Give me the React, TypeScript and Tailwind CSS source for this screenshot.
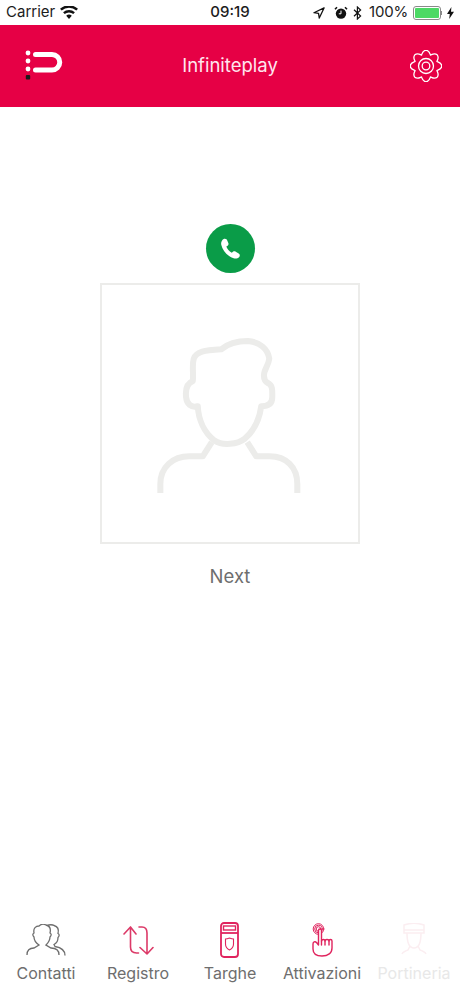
import React from 'react';

const font = "font-['Inter','Liberation_Sans',sans-serif]";

// eight rounded teeth around the centre of a 32 box
const gearPath = () => {
  const pt = (r: number, deg: number) => {
    const a = (deg * Math.PI) / 180;
    return `${(16 + r * Math.cos(a)).toFixed(2)} ${(16 + r * Math.sin(a)).toFixed(2)}`;
  };
  let d = `M${pt(11.8, -22.5)}`;
  for (let i = 0; i < 8; i++) {
    const c = i * 45;
    d += `C${pt(13, c - 17)} ${pt(15.800, c - 13)} ${pt(15.800, c)}`;
    d += `C${pt(15.800, c + 13)} ${pt(13, c + 17)} ${pt(11.800, c + 22.500)}`;
  }
  return d + 'Z';
};

const StatusBar = () => (
  <div className="flex h-[25px] items-center justify-between bg-white px-[6px] text-[15px] text-[#1c1c1c]">
    <div className="flex w-[150px] items-center gap-[5px]">
      <span>Carrier</span>
      <svg width="18" height="13" viewBox="0 0 18 13" fill="#111">
        <path d="M9 13 6.2 9.7a4.4 4.4 0 0 1 5.6 0zM4.7 8 3.1 6.2a9 9 0 0 1 11.8 0L13.3 8a6.6 6.6 0 0 0-8.6 0zM1.7 4.6 0 2.8a13.3 13.3 0 0 1 18 0l-1.7 1.8a11 11 0 0 0-14.6 0z" />
      </svg>
    </div>
    <span className="font-medium">09:19</span>
    <div className="flex w-[150px] items-center justify-end gap-[5px]">
      <svg className="mr-[4px]" width="12" height="12" viewBox="0 0 13 13" fill="none" stroke="#111" strokeWidth="1.4">
        <path d="M12 1 1 6.2l5 .8.8 5z" strokeLinejoin="round" />
      </svg>
      <svg width="14" height="14" viewBox="0 0 14 14">
        <circle cx="7" cy="7.6" r="5.2" fill="#111" />
        <path d="M1 3.2 3 1.2M13 3.2l-2-2" stroke="#111" strokeWidth="1.6" />
        <path d="M7 4.6v3.2H4.8" stroke="#fff" strokeWidth="1" fill="none" />
      </svg>
      <svg className="mr-[2px]" width="9" height="14" viewBox="0 0 9 14" fill="none" stroke="#111" strokeWidth="1.2">
        <path d="M1 3.800 7.600 10 4.400 13V1l3.200 3L1 10.200" />
      </svg>
      <span className="tracking-[-0.2px]">100%</span>
      <div className="flex items-center">
        <div className="h-[14px] w-[28px] rounded-[3px] border border-[#8a8a8a] p-[1px]">
          <div className="h-full w-full rounded-[1px] bg-[#4cd964]" />
        </div>
        <div className="h-[4px] w-[1px] bg-[#8a8a8a]" />
      </div>
      <svg width="7" height="12" viewBox="0 0 7 12" fill="#111">
        <path d="M4.400 0 0 7h2.800L2.200 12 7 4.800H4z" />
      </svg>
    </div>
  </div>
);

const Header = () => (
  <div className="flex h-[82px] items-center justify-between bg-[#e60045] pl-[25px] pr-[18px]">
    <div className="w-[60px]">
      <svg width="40" height="32" viewBox="0 0 40 32" fill="none">
        <circle cx="3" cy="3" r="2.400" fill="#fff" />
        <circle cx="3" cy="11" r="2.400" fill="#fff" />
        <circle cx="3" cy="19" r="2.400" fill="#fff" />
        <rect x="0.800" y="25" width="4.400" height="4.400" rx="1" fill="#1a1a1a" />
        <path d="M10.500 4.500H27a7.750 7.750 0 0 1 0 15.500H10.500" stroke="#fff" strokeWidth="5" strokeLinecap="round" />
      </svg>
    </div>
    <span className="text-[18.500px] text-[#ffe6ee]">Infiniteplay</span>
    <div className="flex w-[67px] justify-end">
      <svg width="32" height="32" viewBox="0 0 32 32" fill="none" stroke="#fff" strokeWidth="1.300" strokeLinejoin="round">
        <path d={gearPath()} />
        <circle cx="16" cy="16" r="7.500" />
        <circle cx="16" cy="16" r="3.800" />
      </svg>
    </div>
  </div>
);

// traced in crop coordinates, so the viewBox starts away from zero
const Avatar = () => (
  <svg className="ml-[-2px] mt-[3px]" width="147" height="157" viewBox="195 365 440 470" fill="none" stroke="#ececea" strokeWidth="18" strokeLinejoin="round">
    <path d="M320 572C300 578 287 565 285 545C283 525 284 505 305 497C308 475 302 450 308 430C316 408 340 405 390 402C410 385 440 377 470 377C505 380 530 400 534 430C532 450 518 462 518 480C518 490 520 497 530 503C545 510 543 525 543 545C543 565 530 572 510 572C505 610 490 645 460 670C440 686 395 692 370 675C338 650 322 610 320 572Z" />
    <path d="M362 680 335 722H295C245 722 208 755 208 805V832" />
    <path d="M468 680 495 722H535C585 722 618 755 618 805V832" />
  </svg>
);

const Tab = ({ label, muted, children }: { label: string; muted?: boolean; children: React.ReactNode }) => (
  <div className="flex w-[92px] flex-col items-center">
    <div className="flex h-[38px] items-center justify-center">{children}</div>
    <span className={`mt-[4px] text-[16px] leading-[20px] ${muted ? 'text-[#e8e8e8]' : 'text-[#6e6e6e]'}`}>{label}</span>
  </div>
);

export default function App() {
  return (
    <div className={`flex h-[996px] w-[460px] flex-col bg-white ${font}`}>
      <StatusBar />
      <Header />
      <div className="flex flex-1 flex-col items-center pt-[117px]">
        <div className="flex h-[49px] w-[49px] items-center justify-center rounded-full bg-[#0a9c48]">
          <svg width="21" height="21" viewBox="0 0 20 20" fill="#fff">
            <path d="M3.500 1C5 .3 6.500 1 7 2.500L8 5C8.400 6 8 7 7 7.600L6 8.200C6.800 10.500 8.800 12.800 11.200 14L12.300 13.200C13.100 12.600 14.200 12.600 15 13.100L17.800 14.800C19 15.600 19.200 17 18.300 18C17 19.300 15 19.800 13 19.200C7 17.500 2.500 12 1.200 6.500C.7 4.300 1.700 2 3.500 1Z" />
          </svg>
        </div>
        <div className="mt-[10px] flex h-[261px] w-[260px] items-center justify-center border-2 border-[#ececea]">
          <Avatar />
        </div>
        <div className="mt-[20px] text-[18.500px] leading-[24px] text-[#6e6e6e]">Next</div>
      </div>
      <div className="flex h-[81px] justify-center pt-[6px]">
        <Tab label="Contatti">
          <svg width="40" height="32" viewBox="0 0 40 32" fill="none" stroke="#6e6e6e" strokeWidth="1.300">
            <path d="M1 31c0-5 3-7 7-7l5-3c-3-2-5-5-5-8-1-1-2-3 0-4-1-5 2-7 5-7 2-2 5-2 7-1 4 1 5 4 4 8 2 1 1 3 0 4 0 3-2 6-4 8l5 3c5 0 8 2 8 7" />
            <path d="M21 1.500c2-1 6-1 7 0 4 1 5 4 4 8 2 1 1 3 0 4 0 3-2 6-4 7l1 2c6 1 10 3 10 9" />
          </svg>
        </Tab>
        <Tab label="Registro">
          <svg width="31" height="29" viewBox="0 0 31 29" fill="none" stroke="#dc3a68" strokeWidth="1.600" strokeLinecap="round" strokeLinejoin="round">
            <path d="M1 8 7.500 1 13 8M7.500 1v20c0 4 2 6 6 6h2" />
            <path d="M16 1h3c4 0 5 2 5 6v21M30 21.500 24 28l-7-6.500" />
          </svg>
        </Tab>
        <Tab label="Targhe">
          <svg className="mr-[1px]" width="19" height="36" viewBox="0 0 19 36" fill="none" stroke="#e0245e" strokeWidth="1.800">
            <rect x="1" y="1" width="17" height="34" rx="3" />
            <rect x="3.500" y="4" width="12" height="4" strokeWidth="1.400" />
            <path d="M1 11h17" />
            <path d="M5.500 17c2.500 0 3-.7 4-1 1 .3 1.500 1 4 1v5c0 3-2 5-4 6-2-1-4-3-4-6z" strokeWidth="1.100" />
          </svg>
        </Tab>
        <Tab label="Attivazioni">
          <svg width="21" height="34" viewBox="0 0 21 34" fill="none" stroke="#e0245e" strokeWidth="1.400" strokeLinecap="round" strokeLinejoin="round">
            <circle cx="6.500" cy="6" r="2.300" strokeWidth="1" />
            <circle cx="6.500" cy="6" r="3.800" strokeWidth="1" />
            <circle cx="6.500" cy="6" r="5.300" strokeWidth="1" />
            <path d="M1 21v5c0 5 3 7 9 7s10-3 10-8v-7c0-2-3-2-3 0 0-2-4-2-4 0 0-2-3-2-3.500 0V7.500c0-2-3-2-3 0V22l-2-2.500C3 18 1 19 1 21z" fill="#fff" />
            <path d="M9.500 18v4M13 18v4M17 18v4" />
          </svg>
        </Tab>
        <Tab label="Portineria" muted>
          <svg width="26" height="34" viewBox="0 0 26 34" fill="none" stroke="#fbeef1" strokeWidth="1.500">
            <path d="M3 2c6-2 14-2 20 0v8H3zM3 7h20" />
            <path d="M6 10c0 8 2 15 7 15s7-7 7-15" />
            <path d="M9 23l-2 4c-3 1-5 2-6 4M17 23l2 4c3 1 5 2 6 4" />
          </svg>
        </Tab>
      </div>
    </div>
  );
}
